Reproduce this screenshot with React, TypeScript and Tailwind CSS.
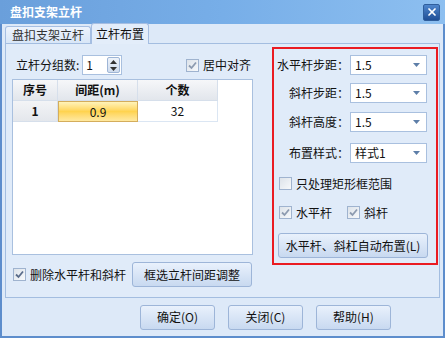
import { X } from "lucide-react";

const font = "font-['Microsoft_YaHei','Noto_Sans_CJK_SC',sans-serif]";

function Check({ checked = false, dim = false }: { checked?: boolean; dim?: boolean }) {
  return (
    <span className="flex h-[13px] w-[13px] shrink-0 items-center justify-center border border-[#9fb3cf] bg-gradient-to-br from-[#dde3ea] to-[#f7f9fb]">
      {checked && (
        <svg width="9" height="9" viewBox="0 0 9 9">
          <path d="M1 4.5 L3.5 7 L8 1.5" fill="none" stroke={dim ? "#8d9bb0" : "#5a6c8a"} strokeWidth="1.8" />
        </svg>
      )}
    </span>
  );
}

function Select({ value }: { value: string }) {
  return (
    <div className="flex h-[20px] w-[77px] items-center justify-between border border-[#a9c0df] bg-white pl-[4px] pr-[6px] text-[12px]">
      <span>{value}</span>
      <svg width="7" height="4" viewBox="0 0 7 4">
        <path d="M0 0 H7 L3.5 4 Z" fill="#5d7ea8" />
      </svg>
    </div>
  );
}

function Btn({ label, w }: { label: React.ReactNode; w: string }) {
  return (
    <div className={`flex h-[25px] items-center justify-center rounded-[3px] border border-[#9db5d8] bg-gradient-to-b from-[#e9f1fc] to-[#c8d9f0] text-[12px] ${w}`}>
      {label}
    </div>
  );
}

const fields = [
  { label: "水平杆步距：", value: "1.5", mt: "mt-[6px]" },
  { label: "斜杆步距：", value: "1.5", mt: "mt-[8px]" },
  { label: "斜杆高度：", value: "1.5", mt: "mt-[9px]" },
  { label: "布置样式：", value: "样式1", mt: "mt-[11px]" },
];

export default function App() {
  return (
    <div className={`flex h-[338px] w-[445px] flex-col bg-[#5d8dcc] text-[#111] ${font}`}>
      {/* title bar */}
      <div className="flex h-[24px] items-center justify-between bg-gradient-to-r from-[#6a9fdb] via-[#77aee8] to-[#8dbff0] pl-[10px] pr-[5px]">
        <span className="text-[12px] font-bold text-white">盘扣支架立杆</span>
        <span className="flex h-[17px] w-[17px] items-center justify-center rounded-[2px] border border-[#2f5e9c] bg-gradient-to-b from-[#4f86cc] to-[#1f4f96]">
          <X size={12} strokeWidth={3.5} color="white" />
        </span>
      </div>

      <div className="mx-[2px] mb-[2px] flex flex-1 flex-col bg-[#dde9f8]">
        {/* tabs */}
        <div className="flex h-[19px] items-end pl-[3px] text-[12px]">
          <div className="flex h-[17px] w-[86px] items-center justify-center rounded-t-[3px] border border-b-0 border-[#a5bee2] bg-gradient-to-b from-[#edf3fc] to-[#d8e6f7] text-[#333]">
            盘扣支架立杆
          </div>
          <div className="relative z-10 -mb-px flex h-[21px] w-[58px] items-center justify-center rounded-t-[3px] border border-b-0 border-[#a5bee2] bg-[#e3edfa]">
            立杆布置
          </div>
        </div>

        {/* panel */}
        <div className="mx-[3px] flex h-[255px] border border-[#a3bde0] bg-[#e0ebf9] text-[12px]">
          {/* left */}
          <div className="flex w-[260px] flex-col pl-[6px]">
            <div className="mt-[11px] flex h-[20px] items-center">
              <span className="ml-[4px]">立杆分组数:</span>
              <div className="ml-[3px] flex h-[20px] w-[40px] items-center border border-[#a9c0df] bg-white pl-[3px]">
                <span className="flex-1">1</span>
                <div className="mr-[1px] flex h-[16px] w-[13px] flex-col items-center justify-center rounded-[2px] border border-[#9eb5d6] bg-gradient-to-b from-[#eef3fa] to-[#cfdcee]">
                  <svg width="7" height="11" viewBox="0 0 7 11">
                    <path d="M0 4 L3.5 0 L7 4 Z M0 7 H7 L3.5 11 Z" fill="#333" />
                  </svg>
                </div>
              </div>
              <div className="ml-auto mr-[15px] flex items-center gap-[4px]">
                <Check checked dim />
                <span>居中对齐</span>
              </div>
            </div>

            {/* grid */}
            <div className="mt-[4px] h-[176px] w-[241px] border border-[#a9c0df] bg-white">
              <div className="flex h-[21px] font-bold">
                <div className="flex w-[45px] items-center justify-center border-b border-r border-[#d6dfeb] bg-gradient-to-b from-[#f6f7f9] to-[#e2e6ec]">序号</div>
                <div className="flex w-[80px] items-center justify-center border-b border-r border-[#d6dfeb] bg-gradient-to-b from-[#f6f7f9] to-[#e2e6ec]">间距(m)</div>
                <div className="flex w-[80px] items-center justify-center border-b border-r border-[#d6dfeb] bg-gradient-to-b from-[#f6f7f9] to-[#e2e6ec]">个数</div>
              </div>
              <div className="flex h-[21px]">
                <div className="flex w-[45px] items-center justify-center border-r border-b border-[#d6dfeb] bg-gradient-to-b from-[#f3f4f6] to-[#e4e7ec] font-bold">1</div>
                <div className="flex w-[80px] items-center justify-center border border-[#d4ad5c] bg-gradient-to-b from-[#fff3b8] via-[#ffd34f] to-[#ffe9a0]">0.9</div>
                <div className="flex w-[80px] items-center justify-center border-b border-r border-[#dbe6f3]">32</div>
              </div>
            </div>

            <div className="mt-[7px] flex items-center">
              <span className="ml-[1px]"><Check checked /></span>
              <span className="ml-[4px]">删除水平杆和斜杆</span>
              <span className="ml-[6px]"><Btn label="框选立杆间距调整" w="w-[120px]" /></span>
            </div>
          </div>

          {/* right red box */}
          <div className="ml-[6px] mt-[3px] flex h-[218px] w-[166px] flex-col border-2 border-[#ea1b22] pl-[3px]">
            {fields.map((f) => (
              <div key={f.label} className={`flex h-[20px] items-center ${f.mt}`}>
                <span className="w-[72px] whitespace-nowrap text-right">{f.label}</span>
                <span className="ml-[1px]"><Select value={f.value} /></span>
              </div>
            ))}
            <div className="mt-[12px] flex h-[17px] items-center gap-[4px] pl-[2px]">
              <Check />
              <span>只处理矩形框范围</span>
            </div>
            <div className="mt-[12px] flex h-[17px] items-center pl-[2px]">
              <Check checked dim />
              <span className="ml-[4px]">水平杆</span>
              <span className="ml-[15px]"><Check checked dim /></span>
              <span className="ml-[4px]">斜杆</span>
            </div>
            <div className="mt-[12px] pl-[1px]">
              <Btn label="水平杆、斜杠自动布置(L)" w="w-[150px]" />
            </div>
          </div>
        </div>

        {/* bottom buttons */}
        <div className="flex flex-1 items-center pl-[138px] text-[12px]">
          <Btn label="确定(O)" w="w-[75px]" />
          <span className="ml-[13px]"><Btn label="关闭(C)" w="w-[75px]" /></span>
          <span className="ml-[13px]"><Btn label="帮助(H)" w="w-[75px]" /></span>
        </div>
      </div>
    </div>
  );
}
